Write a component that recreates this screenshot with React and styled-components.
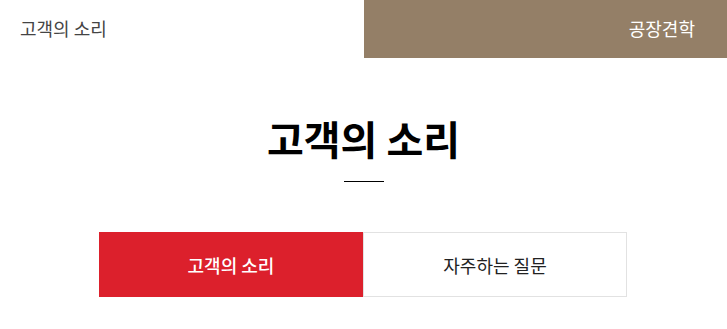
import React from 'react';
import styled, { createGlobalStyle } from 'styled-components';

const GlobalStyle = createGlobalStyle`
  html, body {
    margin: 0;
    padding: 0;
    background: #fff;
    font-family: "Noto Sans CJK KR", "Noto Sans", sans-serif;
  }
`;

const TopBar = styled.header`
  display: flex;
  height: 58px;
`;

const TopLeft = styled.div`
  flex: 0 0 364px;
  display: flex;
  align-items: center;
  padding-left: 20px;
  padding-bottom: 3px;
  box-sizing: border-box;
  font-size: 18px;
  color: #444;
`;

const TopRight = styled.div`
  flex: 1;
  display: flex;
  align-items: center;
  justify-content: flex-end;
  padding-right: 32px;
  padding-bottom: 3px;
  background: #947f67;
  color: #fff;
  font-size: 18px;
`;

const Heading = styled.section`
  display: flex;
  flex-direction: column;
  align-items: center;
  padding-top: 52px;
`;

const Title = styled.h1`
  margin: 0;
  font-size: 40px;
  font-weight: 700;
  line-height: 56px;
  color: #000;
`;

const Rule = styled.div`
  width: 40px;
  height: 1px;
  background: #000;
  margin-top: 15px;
`;

const Tabs = styled.nav`
  display: flex;
  width: 528px;
  margin: 50px 0 0 99px;
`;

const Tab = styled.div`
  flex: 1;
  height: 65px;
  box-sizing: border-box;
  display: flex;
  align-items: center;
  justify-content: center;
  font-size: 18px;
  font-weight: ${({ $active }) => ($active ? 500 : 400)};
  background: ${({ $active }) => ($active ? '#dc202c' : '#fff')};
  color: ${({ $active }) => ($active ? '#fff' : '#222')};
  border: 1px solid ${({ $active }) => ($active ? '#dc202c' : '#e2e2e2')};
`;

const App = () => {
  return (
    <>
      <GlobalStyle />
      <TopBar>
        <TopLeft>고객의 소리</TopLeft>
        <TopRight>공장견학</TopRight>
      </TopBar>
      <Heading>
        <Title>고객의 소리</Title>
        <Rule />
      </Heading>
      <Tabs>
        <Tab $active>고객의 소리</Tab>
        <Tab>자주하는 질문</Tab>
      </Tabs>
    </>
  );
};

export default App;
